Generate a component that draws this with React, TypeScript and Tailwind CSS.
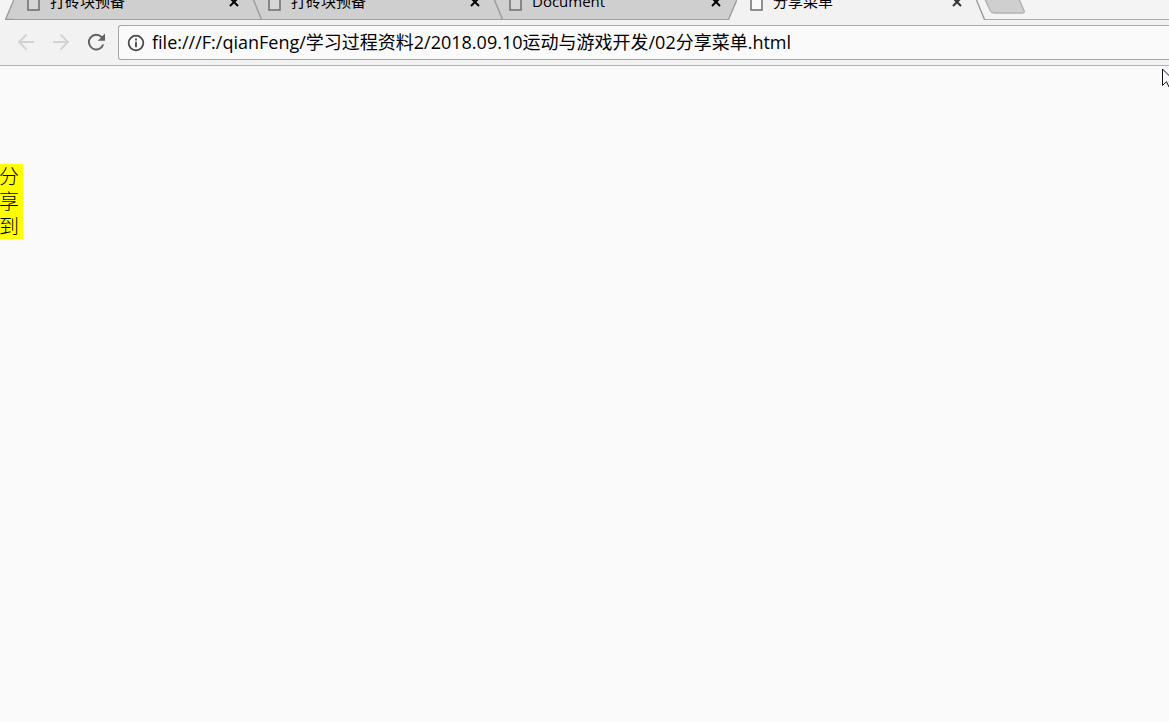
import { clsx } from "clsx";

const tabs = [
  { id: "bricks-1", title: "打砖块预备" },
  { id: "bricks-2", title: "打砖块预备" },
  { id: "document", title: "Document" },
  { id: "share", title: "分享菜单", active: true },
];

const address =
  "file:///F:/qianFeng/学习过程资料2/2018.09.10运动与游戏开发/02分享菜单.html";

function LeftEdge({ active }: { active?: boolean }) {
  return (
    <svg
      className="absolute right-full -bottom-px z-10"
      width="9"
      height="20"
      viewBox="0 0 9 20"
      aria-hidden="true"
    >
      <path d="M0 20L9 0V20Z" fill={active ? "#f2f2f2" : "#cfcfcf"} />
      <path
        d={active ? "M0 19.5H0.5L8.8 0" : "M9 19.5H0.5L8.8 0"}
        fill="none"
        stroke="#9c9c9c"
        strokeWidth="1.4"
      />
    </svg>
  );
}

function RightEdge({ active }: { active?: boolean }) {
  return (
    <svg
      className="absolute right-[-7px] -bottom-px z-10"
      width="9"
      height="20"
      viewBox="0 0 9 20"
      aria-hidden="true"
    >
      {active ? <path d="M0 0L8.5 20H0Z" fill="#f2f2f2" /> : null}
      <path d="M0.5 0L8.5 19.5H9" fill="none" stroke="#9c9c9c" strokeWidth="1.4" />
    </svg>
  );
}

function Tab({
  title,
  active,
  first,
  beforeActive,
}: {
  title: string;
  active?: boolean;
  first: boolean;
  beforeActive: boolean;
}) {
  return (
    <div
      className={clsx(
        "relative flex h-9 w-[241px] shrink-0 items-center border-b pr-4 pl-[13px]",
        active ? "border-[#f2f2f2] bg-[#f2f2f2]" : "border-[#a3a3a3] bg-[#cfcfcf]"
      )}
    >
      {first || active ? <LeftEdge active={active} /> : null}
      <svg width="13" height="18" viewBox="0 0 13 18" aria-hidden="true">
        <path
          d="M1 1H8.5L12 4.5V17H1Z"
          fill={active ? "#fafafa" : "#d6d6d6"}
          stroke="#6e6e6e"
          strokeWidth="1.5"
        />
      </svg>
      <a
        href="#page"
        className="ml-2.5 flex-1 truncate pb-0.5 text-[15px] leading-6 text-black"
      >
        {title}
      </a>
      <button type="button" aria-label="Close tab">
        <svg width="10" height="10" viewBox="0 0 10 10" aria-hidden="true">
          <path
            d="M1 1L9 9M9 1L1 9"
            stroke={active ? "#333333" : "#000000"}
            strokeWidth="2"
          />
        </svg>
      </button>
      {beforeActive ? null : <RightEdge active={active} />}
    </div>
  );
}

function TabStrip() {
  return (
    <nav className="flex h-5 items-end overflow-hidden bg-[#f4f4f4] pl-3.5">
      {tabs.map((tab, i) => (
        <Tab
          key={tab.id}
          title={tab.title}
          active={tab.active}
          first={i === 0}
          beforeActive={Boolean(tabs[i + 1]?.active)}
        />
      ))}
      <div className="ml-1.5 flex h-9 flex-1 items-center border-b border-[#a9a9a9]">
        <button type="button" aria-label="New tab" className="-ml-2">
          <svg width="50" height="24" viewBox="0 0 50 24" aria-hidden="true">
            <path
              d="M1 1H37Q39 1 40 3L48 20.5Q49 23 46 23H18Q15.5 23 14.5 21L6 3Z"
              fill="#cfcfcf"
              stroke="#b3b3b3"
              strokeWidth="1.5"
            />
          </svg>
        </button>
      </div>
    </nav>
  );
}

function Toolbar() {
  return (
    <div className="flex items-center border-b border-[#b4b4b4] bg-[#f2f2f2] py-[5px] pl-3.5">
      <div className="flex gap-[11px] pb-0.5">
        <button type="button" aria-label="Back" disabled>
          <svg width="24" height="24" viewBox="0 0 24 24" aria-hidden="true">
            <path
              d="M20 12H5M12.5 4.5L5 12L12.5 19.5"
              fill="none"
              stroke="#d2d2d2"
              strokeWidth="1.8"
            />
          </svg>
        </button>
        <button type="button" aria-label="Forward" disabled>
          <svg width="24" height="24" viewBox="0 0 24 24" aria-hidden="true">
            <path
              d="M4 12H19M11.5 4.5L19 12L11.5 19.5"
              fill="none"
              stroke="#d2d2d2"
              strokeWidth="1.8"
            />
          </svg>
        </button>
        <button type="button" aria-label="Reload">
          <svg width="24" height="24" viewBox="0 0 24 24" aria-hidden="true">
            <path
              d="M18.2 6.3A8.3 8.3 0 1 0 20.2 14.5H18.2A6.4 6.4 0 1 1 16.9 7.7L13.8 10.8H21V3.6Z"
              fill="#606060"
            />
          </svg>
        </button>
      </div>
      <div className="ml-2.5 flex h-[35px] flex-1 items-center rounded-l-[3px] border border-r-0 border-[#a6a6a6] bg-[#fafafa] pl-[7px]">
        <svg width="20" height="20" viewBox="0 0 24 24" aria-hidden="true">
          <circle cx="12" cy="12" r="8.8" fill="none" stroke="#484848" strokeWidth="2.1" />
          <path d="M10.9 10.5H13.1V17H10.9ZM10.9 6.7H13.1V9H10.9Z" fill="#484848" />
        </svg>
        <input
          type="text"
          aria-label="Address"
          defaultValue={address}
          spellCheck={false}
          className="ml-1.5 h-full min-w-0 flex-1 bg-transparent pb-[3px] text-[18px] text-black outline-none"
        />
      </div>
    </div>
  );
}

export default function App() {
  return (
    <div className="relative flex min-h-screen flex-col overflow-hidden bg-[#fafafa] font-['Open_Sans','Noto_Sans_CJK_SC',sans-serif]">
      <header>
        <TabStrip />
        <Toolbar />
      </header>
      <main id="page" className="flex-1 pt-[98px]">
        <aside className="-ml-px w-6 bg-[#ffff00] text-[20px] leading-[25px] font-light break-all text-black">
          分享到
        </aside>
      </main>
      <svg
        className="absolute top-[68px] -right-1.5"
        width="13"
        height="20"
        viewBox="0 0 13 20"
        aria-hidden="true"
      >
        <path
          d="M0.5 1V17.5L4.5 13.7L7 19H9.5L7.2 13H12.5Z"
          fill="#fafafa"
          stroke="#101020"
        />
      </svg>
    </div>
  );
}
